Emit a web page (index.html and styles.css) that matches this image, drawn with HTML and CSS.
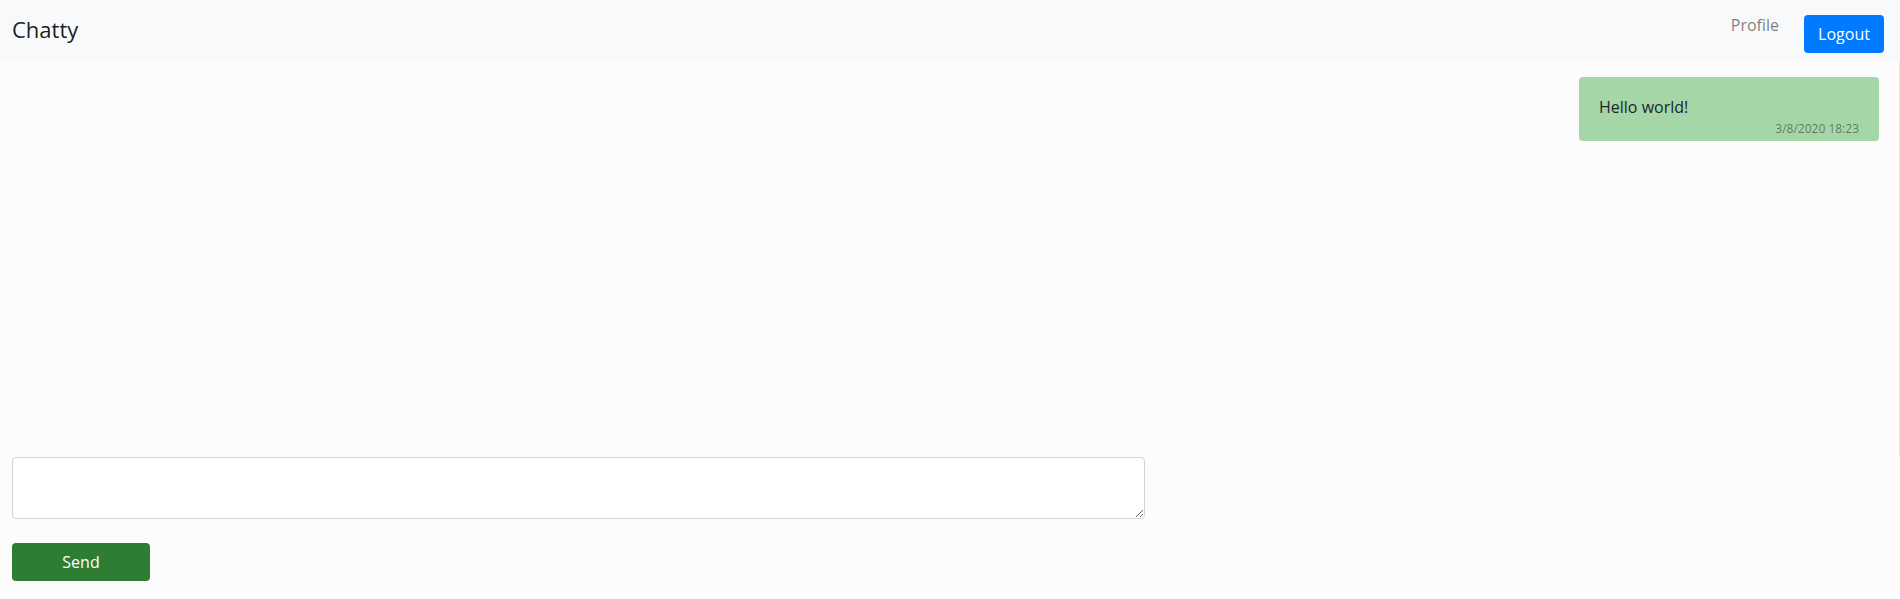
FILE: index.html
```html
<!DOCTYPE html>
<html lang="en">
<head>
<meta charset="utf-8">
<title>Chatty</title>
<link rel="stylesheet" href="styles.css">
</head>
<body>
<header class="navbar">
  <a class="brand" href="#">Chatty</a>
  <nav class="nav">
    <a class="nav-link" href="#">Profile</a>
    <button class="btn-logout" type="button">Logout</button>
  </nav>
</header>
<main class="chat-area">
  <div class="message">
    <p class="message-text">Hello world!</p>
    <span class="message-time">3/8/2020 18:23</span>
  </div>
</main>
<form class="composer">
  <textarea class="composer-input"></textarea>
  <button class="btn-send" type="button">Send</button>
</form>
</body>
</html>
```

FILE: styles.css
```css
* { box-sizing: border-box; }
html, body {
  margin: 0;
  padding: 0;
  background: #fcfcfc;
  font-family: "Open Sans", "DejaVu Sans", sans-serif;
  color: #212529;
  overflow: hidden;
}
.navbar {
  height: 60px;
  background: #f8f9fa;
  display: flex;
  align-items: flex-start;
  justify-content: space-between;
  padding: 0 16px 0 12px;
}
.brand {
  margin-top: 14px;
  font-size: 22px;
  line-height: 30px;
  color: rgba(0, 0, 0, 0.9);
  text-decoration: none;
}
.nav {
  display: flex;
  align-items: flex-start;
  gap: 25px;
}
.nav-link {
  margin-top: 13px;
  font-size: 16px;
  line-height: 24px;
  color: rgba(0, 0, 0, 0.5);
  text-decoration: none;
}
.btn-logout {
  margin-top: 15px;
  width: 80px;
  height: 38px;
  border: none;
  border-radius: 4px;
  background: #007bff;
  color: #fff;
  font-family: inherit;
  font-size: 16px;
  padding: 0;
}
.chat-area {
  height: 396px;
  border-right: 1px solid #e8e8e8;
  display: flex;
  flex-direction: column;
  align-items: flex-end;
  padding: 17px 20px 0 0;
}
.message {
  width: 300px;
  height: 64px;
  background: #a5d6a7;
  border-radius: 4px;
  padding: 18px 20px 4px 20px;
  display: flex;
  flex-direction: column;
}
.message-text {
  margin: 0;
  font-size: 16px;
  line-height: 24px;
  color: #212529;
}
.message-time {
  margin-top: 2px;
  align-self: flex-end;
  font-size: 12px;
  line-height: 16px;
  color: rgba(0, 0, 0, 0.45);
}
.composer {
  display: flex;
  flex-direction: column;
  align-items: flex-start;
  padding: 1px 0 0 12px;
}
.composer-input {
  width: 1133px;
  height: 62px;
  border: 1px solid #ced4da;
  border-radius: 4px;
  background: #fff;
  font-family: inherit;
  font-size: 16px;
  margin: 0;
}
.btn-send {
  margin-top: 24px;
  width: 138px;
  height: 38px;
  border: none;
  border-radius: 4px;
  background: #2e7d32;
  color: #fff;
  font-family: inherit;
  font-size: 16px;
  padding: 0;
}
```
